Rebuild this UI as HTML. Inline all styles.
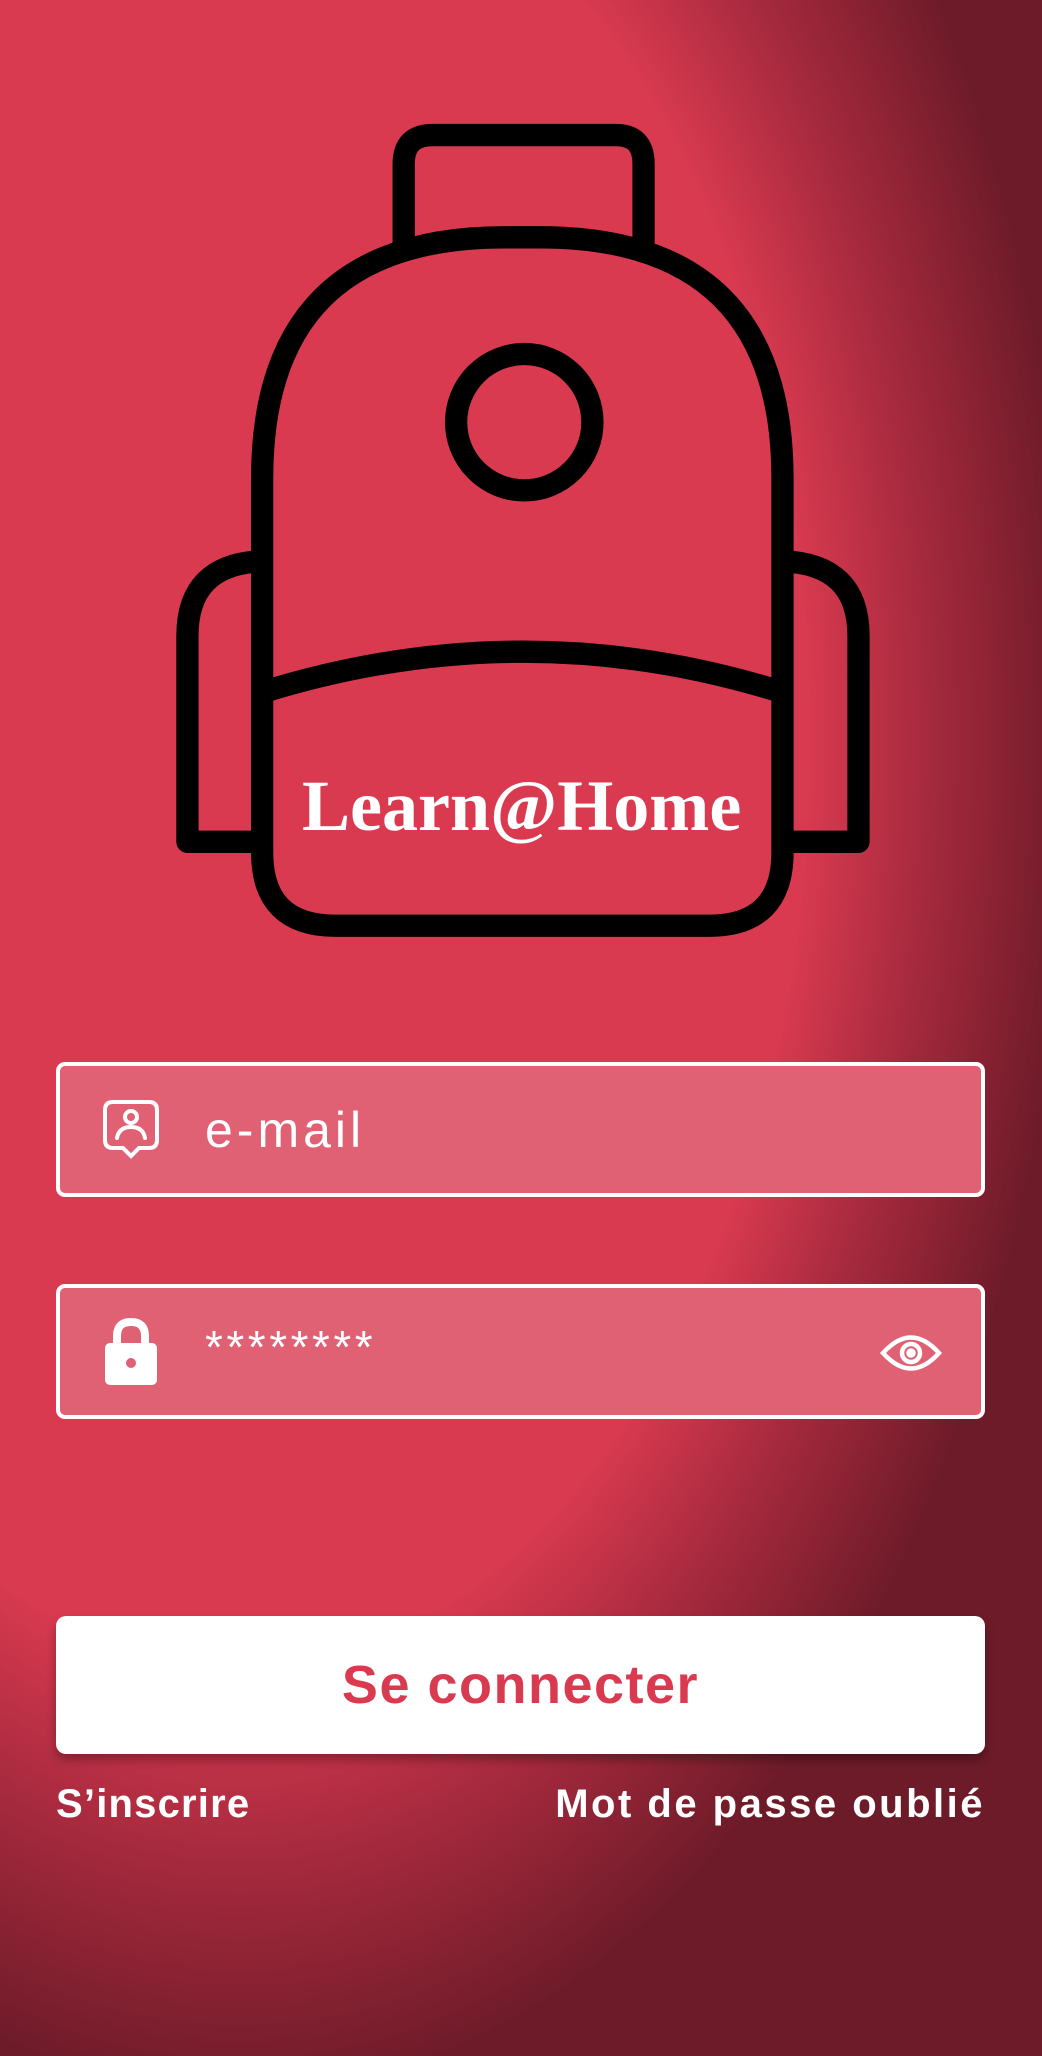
<!DOCTYPE html>
<html><head><meta charset="utf-8"><style>
html,body{margin:0;padding:0}
body{width:1042px;height:2056px;position:relative;overflow:hidden;
background:radial-gradient(ellipse 80% 66% at 23% 36%, #D93A50 0%, #D93A50 68%, #A82A3E 82%, #6E1B29 100%);
font-family:"Liberation Sans",sans-serif;color:#fff}
.field{position:absolute;left:56px;width:921px;height:127px;border:4px solid #fff;border-radius:9px;background:#DF6173}
.ph{position:absolute;left:149px;font-size:50px;letter-spacing:3px;color:#fff}
.btn{position:absolute;left:56px;top:1616px;width:929px;height:138px;background:#fff;border-radius:10px;box-shadow:0 6px 10px rgba(0,0,0,0.3);
text-align:center;line-height:138px;font-weight:bold;font-size:54px;color:#D93A50;letter-spacing:1.5px}
.lnk{position:absolute;top:1782px;font-weight:bold;font-size:40px;letter-spacing:1.2px;color:#fff}
</style></head><body>
<svg style="position:absolute;left:0;top:0" width="1042" height="2056" viewBox="0 0 795 1568" preserveAspectRatio="none">
<g fill="none" stroke="#000" stroke-width="17" stroke-linejoin="round">
<path d="M308,190 V125 Q308,103 330,103 H470 Q491,103 491,125 V190"/>
<path d="M200,365 Q200,181 385,181 H412 Q597,181 597,365 V650 Q597,706 541,706 H256 Q200,706 200,650 Z" fill="#D93A50"/>
<circle cx="400" cy="322" r="52"/>
<path d="M200,528 Q400,466 597,528"/>
<path d="M200,428 Q143,430 143,485 V642 H200"/>
<path d="M597,428 Q655,430 655,485 V642 H597"/>
</g>
<text x="398" y="633" text-anchor="middle" font-family="Liberation Serif, serif" font-weight="bold" font-size="55" fill="#fff">Learn@Home</text>
</svg>
<div class="field" style="top:1062px"></div>
<div class="field" style="top:1284px"></div>
<svg style="position:absolute;left:103px;top:1100px" width="56" height="62" viewBox="0 0 56 62" fill="none" stroke="#fff" stroke-width="4" stroke-linecap="round">
<path d="M10,2 H46 Q54,2 54,10 V40 Q54,48 46,48 H36 L28,56 L20,48 H10 Q2,48 2,40 V10 Q2,2 10,2 Z"/>
<circle cx="28" cy="17" r="6"/>
<path d="M14,38 Q16,27 28,27 Q40,27 42,38"/>
</svg>
<div class="ph" style="top:1101px;left:205px;letter-spacing:4px">e-mail</div>
<svg style="position:absolute;left:104px;top:1316px" width="54" height="70" viewBox="0 0 54 70">
<path d="M13,28 V20 Q13,6 27,6 Q41,6 41,20 V28" fill="none" stroke="#fff" stroke-width="8"/>
<rect x="1" y="27" width="52" height="42" rx="5" fill="#fff"/>
<circle cx="27" cy="47" r="5" fill="#DF6173"/>
</svg>
<div class="ph" style="top:1320px;left:205px;font-size:46px;letter-spacing:3.5px">********</div>
<svg style="position:absolute;left:880px;top:1330px" width="62" height="46" viewBox="0 0 62 46" fill="none" stroke="#fff" stroke-width="4.5">
<path d="M3,23 Q31,-8 59,23 Q31,54 3,23 Z"/>
<circle cx="31" cy="23" r="9"/>
<circle cx="31" cy="23" r="2.5" fill="#fff"/>
</svg>
<div class="btn">Se connecter</div>
<div class="lnk" style="left:56px">S’inscrire</div>
<div class="lnk" style="right:57px;letter-spacing:2.5px">Mot de passe oublié</div>
</body></html>
